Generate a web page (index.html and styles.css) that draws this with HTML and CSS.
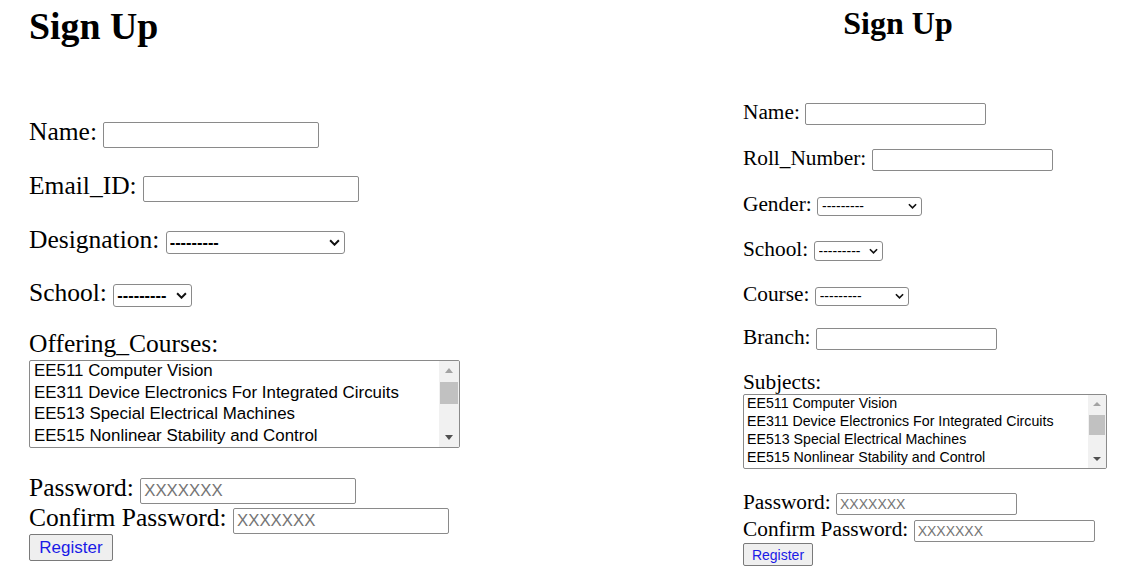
FILE: index.html
```html
<!DOCTYPE html>
<html lang="en">
<head>
<meta charset="utf-8">
<title>Sign Up</title>
<link rel="stylesheet" href="styles.css">
</head>
<body>
<main class="page">
  <section class="panel panel--lg">
    <h1 class="title">Sign Up</h1>
    <form class="form">
      <div class="field mt-69"><label for="f-name">Name:</label> <input id="f-name" class="input" type="text"></div>
      <div class="field mt-25"><label for="f-email">Email_ID:</label> <input id="f-email" class="input" type="email"></div>
      <div class="field mt-25"><label for="f-desig">Designation:</label> <span class="select-wrap"><select id="f-desig" class="select select--desig"><option>---------</option></select><svg class="chev" viewBox="0 0 10 6" aria-hidden="true"><path d="M1 1 L5 5 L9 1"/></svg></span></div>
      <div class="field mt-24"><label for="f-school">School:</label> <span class="select-wrap"><select id="f-school" class="select select--school"><option>---------</option></select><svg class="chev" viewBox="0 0 10 6" aria-hidden="true"><path d="M1 1 L5 5 L9 1"/></svg></span></div>
      <div class="field mt-22"><label>Offering_Courses:</label></div>
      <div class="listbox mt-2" role="listbox" aria-multiselectable="true">
        <ul class="listbox__options">
          <li>EE511 Computer Vision</li>
          <li>EE311 Device Electronics For Integrated Circuits</li>
          <li>EE513 Special Electrical Machines</li>
          <li>EE515 Nonlinear Stability and Control</li>
        </ul>
        <div class="scrollbar" aria-hidden="true">
          <span class="sb-btn"><span class="tri tri--up"></span></span>
          <span class="sb-track"><span class="sb-thumb"></span></span>
          <span class="sb-btn"><span class="tri tri--down"></span></span>
        </div>
      </div>
      <div class="field mt-25"><label for="f-pw">Password:</label> <input id="f-pw" class="input" type="password" placeholder="XXXXXXX"></div>
      <div class="field mt-1"><label for="f-pw2">Confirm Password:</label> <input id="f-pw2" class="input" type="password" placeholder="XXXXXXX"></div>
      <button class="btn mt-2" type="submit">Register</button>
    </form>
  </section>

  <section class="panel panel--sm">
    <h1 class="title">Sign Up</h1>
    <form class="form">
      <div class="field mt-59"><label for="s-name">Name:</label> <input id="s-name" class="input" type="text"></div>
      <div class="field mt-22"><label for="s-roll">Roll_Number:</label> <input id="s-roll" class="input" type="text"></div>
      <div class="field mt-22"><label for="s-gender">Gender:</label> <span class="select-wrap"><select id="s-gender" class="select select--gender"><option>---------</option></select><svg class="chev" viewBox="0 0 10 6" aria-hidden="true"><path d="M1 1 L5 5 L9 1"/></svg></span></div>
      <div class="field mt-21"><label for="s-school">School:</label> <span class="select-wrap"><select id="s-school" class="select select--school"><option>---------</option></select><svg class="chev" viewBox="0 0 10 6" aria-hidden="true"><path d="M1 1 L5 5 L9 1"/></svg></span></div>
      <div class="field mt-21"><label for="s-course">Course:</label> <span class="select-wrap"><select id="s-course" class="select select--course"><option>---------</option></select><svg class="chev" viewBox="0 0 10 6" aria-hidden="true"><path d="M1 1 L5 5 L9 1"/></svg></span></div>
      <div class="field mt-19"><label for="s-branch">Branch:</label> <input id="s-branch" class="input" type="text"></div>
      <div class="field mt-21"><label>Subjects:</label></div>
      <div class="listbox" role="listbox" aria-multiselectable="true">
        <ul class="listbox__options">
          <li>EE511 Computer Vision</li>
          <li>EE311 Device Electronics For Integrated Circuits</li>
          <li>EE513 Special Electrical Machines</li>
          <li>EE515 Nonlinear Stability and Control</li>
        </ul>
        <div class="scrollbar" aria-hidden="true">
          <span class="sb-btn"><span class="tri tri--up"></span></span>
          <span class="sb-track"><span class="sb-thumb"></span></span>
          <span class="sb-btn"><span class="tri tri--down"></span></span>
        </div>
      </div>
      <div class="field mt-21"><label for="s-pw">Password:</label> <input id="s-pw" class="input" type="password" placeholder="XXXXXXX"></div>
      <div class="field mt-3"><label for="s-pw2">Confirm Password:</label> <input id="s-pw2" class="input" type="password" placeholder="XXXXXXX"></div>
      <button class="btn mt-2" type="submit">Register</button>
    </form>
  </section>
</main>
</body>
</html>
```

FILE: styles.css
```css
* { box-sizing: border-box; }

html, body {
  margin: 0;
  padding: 0;
  background: #fff;
  overflow: hidden;
}

body {
  font-family: "Liberation Serif", "Times New Roman", serif;
  color: #000;
}

.page {
  display: flex;
  align-items: flex-start;
  width: 1137px;
  height: 576px;
}

.panel { flex: none; }
.panel--lg { width: 743px; padding-left: 29px; }
.panel--sm { width: 394px; }

.title { margin: 0; font-weight: bold; }
.panel--lg .title { font-size: 37.8px; line-height: 44px; margin-top: 4px; }
.panel--sm .title { font-size: 32px; line-height: 36px; margin-top: 5px; width: 310px; text-align: center; }

.form { margin: 0; }

.field { white-space: nowrap; }
.panel--lg .field { font-size: 25.5px; height: 29px; line-height: 29px; }
.panel--sm .field { font-size: 21.33px; height: 24px; line-height: 24px; }

/* spacing */
.mt-1 { margin-top: 1px; }
.mt-2 { margin-top: 2px; }
.mt-3 { margin-top: 3px; }
.mt-19 { margin-top: 19px; }
.mt-21 { margin-top: 21px; }
.mt-22 { margin-top: 22px; }
.mt-24 { margin-top: 24px; }
.mt-25 { margin-top: 25px; }
.mt-59 { margin-top: 59px; }
.mt-69 { margin-top: 69px; }

/* text inputs */
.input {
  margin: 0;
  padding: 1px 3px;
  border: 1px solid #8a8a8a;
  border-radius: 2px;
  background: #fff;
  color: #000;
  font-family: "Liberation Sans", Arial, sans-serif;
  vertical-align: baseline;
}
.input::placeholder { color: #757575; opacity: 1; }
.panel--lg .input { width: 216px; height: 26px; font-size: 16.8px; }
.panel--sm .input { width: 181px; height: 22px; font-size: 14px; }

/* selects */
.select-wrap { position: relative; display: inline-block; line-height: normal; }
.select {
  -webkit-appearance: none;
  appearance: none;
  display: block;
  margin: 0;
  padding: 0 0 0 3px;
  border: 1px solid #8a8a8a;
  border-radius: 3px;
  background: #fff;
  color: #000;
  font-family: "Liberation Sans", Arial, sans-serif;
}
.chev {
  position: absolute;
  top: 50%;
  fill: none;
  stroke: #111;
  stroke-width: 1.8;
  pointer-events: none;
}
.panel--lg .select { height: 23px; font-size: 16.4px; font-weight: bold; }
.panel--lg .select--desig { width: 179px; }
.panel--lg .select--school { width: 79px; }
.panel--lg .chev { width: 11px; height: 7px; right: 5px; margin-top: -3px; }

.panel--sm .select { font-size: 14px; height: 19px; padding-left: 4px; }
.panel--sm .select--gender { width: 105px; }
.panel--sm .select--school { width: 69px; height: 20px; }
.panel--sm .select--course { width: 94px; }
.panel--sm .chev { width: 9px; height: 6px; right: 5px; margin-top: -3px; }

/* list box */
.listbox {
  display: flex;
  border: 1px solid #8a8a8a;
  border-radius: 2px;
  background: #fff;
  overflow: hidden;
  font-family: "Liberation Sans", Arial, sans-serif;
  color: #000;
}
.listbox__options {
  flex: 1;
  margin: 0;
  list-style: none;
  overflow: hidden;
  white-space: nowrap;
}
.scrollbar {
  flex: none;
  display: flex;
  flex-direction: column;
  background: #f1f1f1;
}
.sb-btn { flex: none; display: flex; align-items: center; justify-content: center; }
.sb-track { flex: 1; display: flex; flex-direction: column; align-items: center; }
.sb-thumb { display: block; background: #c1c1c1; }
.tri { width: 0; height: 0; border-style: solid; border-color: transparent; }
.tri--up { border-bottom-color: #a3a3a3; }
.tri--down { border-top-color: #505050; }

.panel--lg .listbox { width: 431px; height: 88px; }
.panel--lg .listbox__options { padding: 0 0 0 4px; font-size: 16.9px; }
.panel--lg .listbox__options li { line-height: 19px; padding-bottom: 2.7px; }
.panel--lg .scrollbar { width: 20px; }
.panel--lg .sb-btn { height: 20px; }
.panel--lg .sb-thumb { width: 18px; height: 22px; margin-top: 1px; }
.panel--lg .tri--up { border-width: 0 4.5px 5px; margin-top: -2px; }
.panel--lg .tri--down { border-width: 5px 4.5px 0; margin-top: 0; }

.panel--sm .listbox { width: 364px; height: 75px; }
.panel--sm .listbox__options { padding: 0 0 0 3px; font-size: 14.2px; }
.panel--sm .listbox__options li { line-height: 16px; padding-bottom: 2px; }
.panel--sm .scrollbar { width: 18px; }
.panel--sm .sb-btn { height: 18px; }
.panel--sm .sb-thumb { width: 16px; height: 20px; margin-top: 2px; }
.panel--sm .tri--up { border-width: 0 4px 4px; }
.panel--sm .tri--down { border-width: 4px 4px 0; }

/* button */
.btn {
  display: block;
  margin-left: 0;
  margin-right: 0;
  margin-bottom: 0;
  padding: 0;
  border: 1px solid #7a7a7a;
  border-radius: 2px;
  background: #efefef;
  color: #1a1ae6;
  font-family: "Liberation Sans", Arial, sans-serif;
}
.panel--lg .btn { width: 84px; height: 27px; font-size: 17px; }
.panel--sm .btn { width: 70px; height: 23px; font-size: 14px; }
```
